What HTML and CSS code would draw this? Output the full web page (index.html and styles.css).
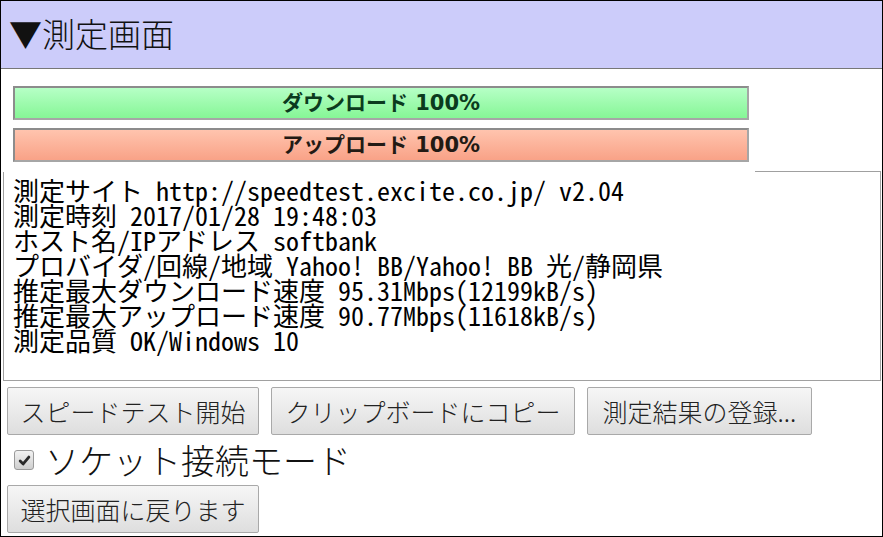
FILE: index.html
```html
<!DOCTYPE html>
<html lang="ja">
<head>
<meta charset="utf-8">
<link rel="stylesheet" href="styles.css">
</head>
<body>
<div class="frame">
  <div class="header">▼測定画面</div>
  <div class="progress">
    <div class="bar bar-down">ダウンロード 100%</div>
    <div class="bar bar-up">アップロード 100%</div>
  </div>
  <div class="result">測定サイト http://speedtest.excite.co.jp/ v2.04
測定時刻 2017/01/28 19:48:03
ホスト名/IPアドレス softbank
プロバイダ/回線/地域 Yahoo! BB/Yahoo! BB 光/静岡県
推定最大ダウンロード速度 95.31Mbps(12199kB/s)
推定最大アップロード速度 90.77Mbps(11618kB/s)
測定品質 OK/Windows 10</div>
  <div class="actions">
    <button class="btn btn-start">スピードテスト開始</button>
    <button class="btn btn-copy">クリップボードにコピー</button>
    <button class="btn btn-reg">測定結果の登録...</button>
  </div>
  <label class="socket">
    <span class="check"><svg viewBox="0 0 12 12" width="13" height="13"><path d="M2 6.5 L4.8 9.2 L10 2.8" fill="none" stroke="#2a2a2a" stroke-width="2.6" stroke-linecap="round" stroke-linejoin="round"/></svg></span>
    <span class="socket-label">ソケット接続モード</span>
  </label>
  <div class="back-row">
    <button class="btn btn-back">選択画面に戻ります</button>
  </div>
</div>
</body>
</html>
```

FILE: styles.css
```css
* { box-sizing: border-box; }
html, body { margin: 0; padding: 0; background: #fff; }
.frame {
  width: 883px;
  height: 537px;
  border: 1px solid #000;
  overflow: hidden;
  font-family: "Noto Sans CJK JP", "Noto Sans", sans-serif;
  color: #111;
  font-kerning: none;
}
.header {
  height: 68px;
  background: #ccccfa;
  border-bottom: 1px solid #777;
  font-size: 33px;
  font-weight: 300;
  line-height: 64px;
  padding-left: 8px;
  color: #111;
}
.progress {
  position: relative;
  z-index: 1;
  width: 754px;
  background: #fff;
  padding: 17px 0 10px 12px;
  margin-bottom: -1px;
  display: flex;
  flex-direction: column;
  gap: 8px;
}
.bar {
  height: 34px;
  width: 736px;
  border: 2px solid #a6a6a6;
  border-top-color: #8c8c8c;
  border-left-color: #8c8c8c;
  font-family: "DejaVu Sans", "Noto Sans CJK JP", sans-serif;
  font-weight: bold;
  font-size: 21px;
  line-height: 30px;
  text-align: center;
  white-space: nowrap;
}
.bar-down {
  background: linear-gradient(#b6ffc6, #86f696);
  color: #0b3b1e;
}
.bar-up {
  background: linear-gradient(#ffc4ae, #f9a287);
  color: #221a14;
}
.result {
  margin-left: 2px;
  width: 878px;
  height: 210px;
  border: 1px solid #a0a0a0;
  padding: 5px 0 0 9px;
  white-space: pre;
  font-family: "Noto Sans Mono CJK JP", "DejaVu Sans Mono", monospace;
  font-size: 26px;
  line-height: 25px;
  color: #000;
  overflow: hidden;
}
.actions {
  display: flex;
  gap: 12px;
  padding: 6px 0 0 6px;
}
.btn {
  height: 48px;
  border: 1px solid #a9a9a9;
  border-radius: 2px;
  background: linear-gradient(#f6f6f6, #dedede);
  font-family: "Noto Sans CJK JP", sans-serif;
  font-size: 25px;
  font-weight: 300;
  color: #222;
  padding: 0;
  line-height: 44px;
  margin: 0;
  text-align: center;
  white-space: nowrap;
}
.btn-start { width: 252px; }
.btn-copy { width: 304px; }
.btn-reg { width: 225px; }
.socket {
  display: flex;
  align-items: center;
  height: 50px;
  padding-left: 13px;
  gap: 11px;
}
.check {
  flex: none;
  width: 20px;
  height: 20px;
  border: 1px solid #9a9a9a;
  border-radius: 3px;
  background: linear-gradient(#f2f2f2, #cfcfcf);
  display: flex;
  align-items: center;
  justify-content: center;
}
.socket-label {
  font-size: 34px;
  font-weight: 300;
  line-height: 40px;
  color: #111;
  white-space: nowrap;
}
.back-row {
  padding-left: 6px;
}
.btn-back { width: 252px; }
```
